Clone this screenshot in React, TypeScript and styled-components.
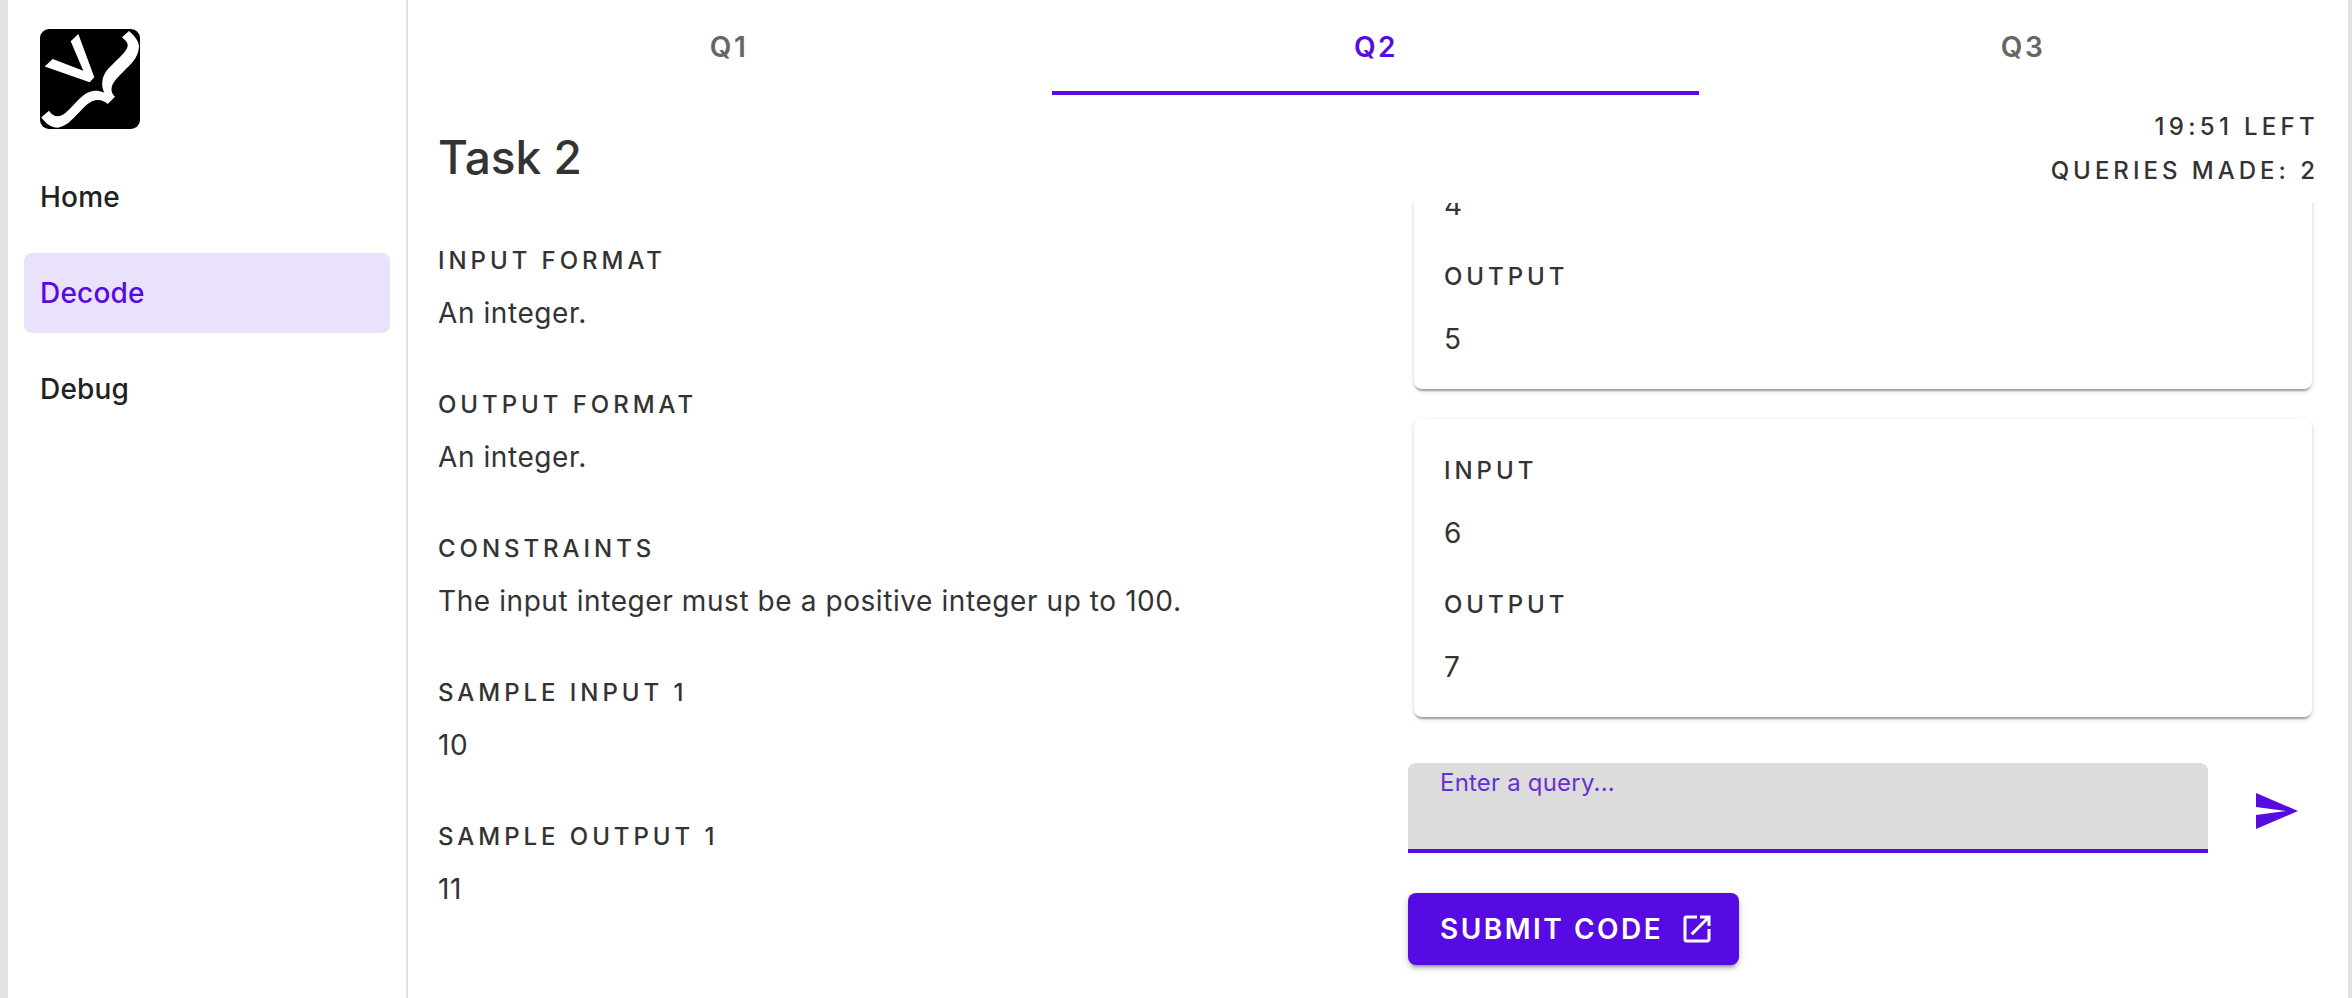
import React from "react";
import styled, { createGlobalStyle } from "styled-components";

const GlobalStyle = createGlobalStyle`
  * { box-sizing: border-box; }
  body { margin: 0; background: #fff; font-family: "Inter", "Liberation Sans", sans-serif; color: #333; }
`;

const purple = "#560be3";

const Page = styled.div`
  display: flex;
  width: 100%;
  height: 998px;
  overflow: hidden;
  border-left: 8px solid #e2e2e2;
  border-right: 4px solid #e2e2e2;
`;

const Sidebar = styled.aside`
  flex: none;
  width: 400px;
  padding: 29px 16px 0;
  border-right: 2px solid #e0e0e0;
`;

const Logo = styled.svg`
  display: block;
  width: 100px;
  height: 100px;
  margin: 0 0 28px 16px;
`;

const Nav = styled.nav`
  display: flex;
  flex-direction: column;
  gap: 16px;
`;

const NavItem = styled.a<{ $active?: boolean }>`
  display: flex;
  align-items: center;
  height: 80px;
  padding: 0 16px;
  border-radius: 8px;
  font-size: 28px;
  font-weight: 500;
  letter-spacing: 0.2px;
  color: ${(p) => (p.$active ? purple : "#212121")};
  background: ${(p) => (p.$active ? "#eae2fb" : "transparent")};
`;

const Main = styled.main`
  flex: 1;
  min-width: 0;
  display: flex;
  flex-direction: column;
`;

const Tabs = styled.div`
  display: flex;
  height: 95px;
  margin: 0 2px 0 -3px;
`;

const Tab = styled.button<{ $active?: boolean }>`
  flex: 1;
  padding: 3px 0 0 1px;
  border: 0;
  border-bottom: 4px solid ${(p) => (p.$active ? purple : "transparent")};
  background: none;
  font: 600 28px/88px "Inter", sans-serif;
  letter-spacing: 2.5px;
  color: ${(p) => (p.$active ? purple : "#666")};
`;

const Header = styled.header`
  display: flex;
  justify-content: space-between;
  height: 108px;
  padding: 0 29px 0 30px;
`;

const Title = styled.h1`
  margin: 30px 0 0;
  font-size: 46px;
  line-height: 64px;
  font-weight: 500;
  letter-spacing: 0;
`;

const Stats = styled.div`
  padding-top: 10px;
  text-align: right;
  font-size: 24px;
  line-height: 44px;
  font-weight: 500;
  letter-spacing: 4px;
`;

const Timer = styled.div`
  letter-spacing: 4.3px;
`;

const Columns = styled.div`
  display: flex;
  justify-content: space-between;
  flex: 1;
  min-height: 0;
`;

const Statement = styled.section`
  padding: 26px 0 0 30px;
`;

const Section = styled.div`
  height: 144px;
`;

const Overline = styled.div`
  font-size: 24px;
  line-height: 64px;
  font-weight: 500;
  letter-spacing: 3.95px;
`;

const Body = styled.div`
  font-size: 28px;
  line-height: 40px;
  letter-spacing: 0.58px;
`;

const Panel = styled.section`
  display: flex;
  flex-direction: column;
  width: 940px;
`;

const History = styled.div`
  display: flex;
  flex-direction: column;
  justify-content: flex-end;
  gap: 30px;
  height: 530px;
  padding: 0 36px 16px 6px;
  overflow: hidden;
`;

const Card = styled.article`
  flex: none;
  height: 298px;
  padding: 20px 30px;
  border-radius: 8px;
  box-shadow: 0 4px 2px -2px rgba(0, 0, 0, 0.2), 0 2px 2px rgba(0, 0, 0, 0.14), 0 2px 6px rgba(0, 0, 0, 0.12);
`;

const CardValue = styled(Body)`
  margin: 10px 0 20px;
`;

const QueryRow = styled.div`
  display: flex;
  align-items: center;
  gap: 40px;
  margin-top: 30px;
`;

const Field = styled.label`
  width: 800px;
  height: 90px;
  padding: 5px 32px;
  border-bottom: 4px solid ${purple};
  border-radius: 8px 8px 0 0;
  background: #dcdcdc;
  font-size: 24px;
  line-height: 30px;
  letter-spacing: 0.2px;
  color: #6a2fd0;
`;

const SendButton = styled.button`
  width: 56px;
  height: 56px;
  margin-top: 6px;
  padding: 4px;
  border: 0;
  background: none;
  color: ${purple};
`;

const Icon = styled.svg`
  display: block;
  fill: currentColor;
`;

const SubmitButton = styled.button`
  display: flex;
  align-items: center;
  justify-content: space-between;
  width: 331px;
  height: 72px;
  margin-top: 40px;
  padding: 0 24px 0 32px;
  border: 0;
  border-radius: 8px;
  background: ${purple};
  color: #fff;
  font: 600 28px/72px "Inter", sans-serif;
  letter-spacing: 2.5px;
  box-shadow: 0 6px 2px -4px rgba(0, 0, 0, 0.2), 0 4px 4px rgba(0, 0, 0, 0.14), 0 2px 10px rgba(0, 0, 0, 0.12);
`;

const sections = [
  ["INPUT FORMAT", "An integer."],
  ["OUTPUT FORMAT", "An integer."],
  ["CONSTRAINTS", "The input integer must be a positive integer up to 100."],
  ["SAMPLE INPUT 1", "10"],
  ["SAMPLE OUTPUT 1", "11"],
];

const queries = [
  ["4", "5"],
  ["6", "7"],
];

export default function App() {
  return (
    <>
      <GlobalStyle />
      <Page>
        <Sidebar>
          <Logo viewBox="0 0 100 100">
            <rect width="100" height="100" rx="9" fill="#000" />
            <path d="M30.700 12.300L38.300 5L54.300 48.300L49.700 53.300L4.700 37.500L12.700 30L43.300 41.700Z" fill="#fff" />
            <path
              d="M89 2C96 8 99 13 99 18C98 29 92 34 83.300 42.700C76 50 72 54 71.500 60C71.500 63 72.500 65.500 75 67.700L67.700 75C65 72.500 62 71.200 58 71C50 71 45 77.500 38.300 84.300C32 90.500 27 97 18 98.700C10 98.700 5 93.500 1.300 88.300L9 81.700C11 85 14 87.300 18.300 87.300C24 86.500 27.500 82 33 76.500C40 69 46 62 55 61.700C58.500 61.700 61 62.300 64.300 63.700C62.500 60 62 56.500 62.300 52.700C63 43 71 37 78 30C83 25 88 20 87.700 16C87.500 13 85 11 82 8.300Z"
              fill="#fff"
            />
          </Logo>
          <Nav>
            <NavItem>Home</NavItem>
            <NavItem $active>Decode</NavItem>
            <NavItem>Debug</NavItem>
          </Nav>
        </Sidebar>
        <Main>
          <Tabs>
            <Tab>Q1</Tab>
            <Tab $active>Q2</Tab>
            <Tab>Q3</Tab>
          </Tabs>
          <Header>
            <Title>Task 2</Title>
            <Stats>
              <Timer>19:51 LEFT</Timer>
              <div>QUERIES MADE: 2</div>
            </Stats>
          </Header>
          <Columns>
            <Statement>
              {sections.map(([label, text]) => (
                <Section key={label}>
                  <Overline>{label}</Overline>
                  <Body>{text}</Body>
                </Section>
              ))}
            </Statement>
            <Panel>
              <History>
                {queries.map(([input, output]) => (
                  <Card key={input}>
                    <Overline>INPUT</Overline>
                    <CardValue>{input}</CardValue>
                    <Overline>OUTPUT</Overline>
                    <CardValue>{output}</CardValue>
                  </Card>
                ))}
              </History>
              <QueryRow>
                <Field>Enter a query...</Field>
                <SendButton aria-label="Send">
                  <Icon width="48" height="48" viewBox="0 0 24 24">
                    <path d="M2.01 21L23 12 2.010 3 2 10l15 2-15 2z" />
                  </Icon>
                </SendButton>
              </QueryRow>
              <SubmitButton>
                SUBMIT CODE
                <Icon width="36" height="36" viewBox="0 0 24 24">
                  <path d="M19 19H5V5h7V3H5a2 2 0 0 0-2 2v14a2 2 0 0 0 2 2h14c1.100 0 2-.9 2-2v-7h-2v7zM14 3v2h3.590l-9.830 9.830 1.410 1.410L19 6.410V10h2V3h-7z" />
                </Icon>
              </SubmitButton>
            </Panel>
          </Columns>
        </Main>
      </Page>
    </>
  );
}
